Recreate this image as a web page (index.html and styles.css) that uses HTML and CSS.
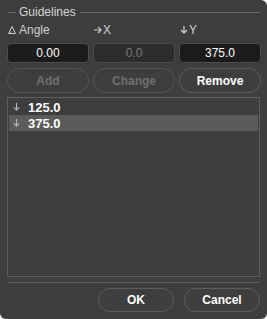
FILE: index.html
```html
<!DOCTYPE html>
<html lang="en">
<head>
    <meta charset="UTF-8">
    <title>Guidelines</title>
    <link rel="stylesheet" href="styles.css">
</head>
<body>
    <div class="dialog">
        <!-- Group title -->
        <div class="group-title">
            <span class="rule short"></span>
            <span class="group-name">Guidelines</span>
            <span class="rule"></span>
        </div>

        <!-- Field labels -->
        <div class="grid labels">
            <div class="label">
                <svg class="angle-icon" width="8" height="8" viewBox="0 0 8 8">
                    <path d="M4 0.5 L7.5 7.5 L0.5 7.5 Z" fill="none" stroke="#cfcfcf" stroke-width="1"/>
                    <path d="M2.3 7.5 Q2.6 5.6 1.6 5" fill="none" stroke="#cfcfcf" stroke-width="0.8"/>
                </svg>
                Angle
            </div>
            <div class="label">
                <svg class="arrow" width="8" height="8" viewBox="0 0 8 8">
                    <path d="M0 4 H7 M4 1 L7 4 L4 7" fill="none" stroke="#d2d2d2" stroke-width="1.2"/>
                </svg>X
            </div>
            <div class="label">
                <svg class="arrow" width="8" height="8" viewBox="0 0 8 8">
                    <path d="M4 0 V7 M1 4 L4 7 L7 4" fill="none" stroke="#d2d2d2" stroke-width="1.2"/>
                </svg>Y
            </div>
        </div>

        <!-- Inputs -->
        <div class="grid">
            <input class="field" type="text" value="0.00">
            <input class="field" type="text" value="0.0" disabled>
            <input class="field" type="text" value="375.0">
        </div>

        <!-- Actions -->
        <div class="grid actions">
            <button class="pill" disabled>Add</button>
            <button class="pill" disabled>Change</button>
            <button class="pill">Remove</button>
        </div>

        <!-- Guides list -->
        <div class="list">
            <div class="row">
                <svg class="row-arrow" width="7" height="8" viewBox="0 0 7 8">
                    <path d="M3.5 0 V7 M0.8 4.3 L3.5 7 L6.2 4.3" fill="none" stroke="#b8b8b8" stroke-width="1.1"/>
                </svg>125.0
            </div>
            <div class="row selected">
                <svg class="row-arrow" width="7" height="8" viewBox="0 0 7 8">
                    <path d="M3.5 0 V7 M0.8 4.3 L3.5 7 L6.2 4.3" fill="none" stroke="#b8b8b8" stroke-width="1.1"/>
                </svg>375.0
            </div>
        </div>

        <div class="separator"></div>

        <div class="footer">
            <button class="pill">OK</button>
            <button class="pill">Cancel</button>
        </div>
    </div>
</body>
</html>
```

FILE: styles.css
```css
html {
    background-color: #fff;
}
body {
    margin: 0;
    padding: 0;
    font-family: "Liberation Sans", Arial, sans-serif;
    font-size: 12px;
    color: #d2d2d2;
}
.dialog {
    width: 267px;
    height: 319px;
    box-sizing: border-box;
    background-color: #3d3d3d;
    border-radius: 0 6px 6px 6px;
    padding: 0 7px;
    display: flex;
    flex-direction: column;
}
.group-title {
    display: flex;
    align-items: center;
    height: 14px;
    margin-top: 5px;
}
.rule {
    flex: 1;
    height: 1px;
    background-color: #686868;
}
.rule.short {
    flex: none;
    width: 8px;
    margin-left: 1px;
}
.group-name {
    padding: 0 4px 0 3px;
    color: #d6d6d6;
}
.grid {
    display: grid;
    grid-template-columns: 82px 82px 82px;
    column-gap: 4px;
}
.labels {
    height: 14px;
    margin-top: 4px;
    align-items: center;
}
.label {
    display: flex;
    align-items: center;
    padding-left: 1px;
    line-height: 14px;
}
.angle-icon {
    margin-right: 3px;
}
.arrow {
    margin-right: 1px;
}
.field {
    margin-top: 6px;
    height: 20px;
    box-sizing: border-box;
    border: 1px solid #4c4c4c;
    border-radius: 4px;
    background-color: #1c1c1c;
    color: #fff;
    font-family: inherit;
    font-size: 12px;
    text-align: center;
    padding: 0;
    outline: none;
}
.field:disabled {
    background-color: #2d2d2d;
    color: #7c7c7c;
}
.actions {
    margin-top: 5px;
}
.pill {
    height: 25px;
    box-sizing: border-box;
    border: 1px solid #5c5c5c;
    border-radius: 13px;
    background-color: transparent;
    color: #fff;
    font-family: inherit;
    font-size: 12px;
    font-weight: bold;
    padding: 0;
}
.pill:disabled {
    color: #707070;
    border-color: #545454;
}
.list {
    margin-top: 4px;
    height: 180px;
    box-sizing: border-box;
    border: 1px solid #5e5e5e;
    padding: 1px;
}
.row {
    display: flex;
    align-items: center;
    height: 16px;
    font-size: 13px;
    font-weight: bold;
    color: #fff;
    padding-left: 4px;
}
.row.selected {
    background-color: #5b5b5b;
}
.row-arrow {
    margin-right: 8px;
}
.separator {
    margin-top: 5px;
    height: 1px;
    background-color: #5e5e5e;
}
.footer {
    display: flex;
    justify-content: flex-end;
    gap: 10px;
    margin-top: 5px;
}
.footer .pill {
    width: 76px;
    height: 24px;
}
```
